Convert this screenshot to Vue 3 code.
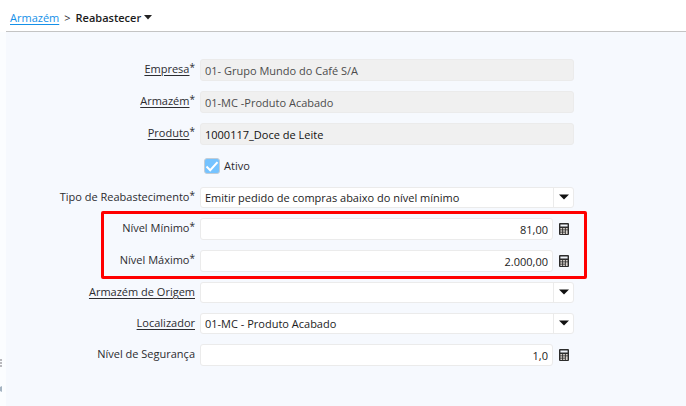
<template>
  <div class="page">
    <header class="topbar">
      <nav class="breadcrumb">
        <a href="#">Armazém</a>
        <span class="separator">&gt;</span>
        <button type="button" class="current">
          Reabastecer
          <svg width="8" height="5" viewBox="0 0 8 5"><path d="M0 0h8L4 4.6z" fill="#222" /></svg>
        </button>
      </nav>
    </header>

    <div class="body">
      <aside class="rail">
        <svg width="2" height="9" viewBox="0 0 2 9">
          <path d="M0 0h2v2H0zM0 3h2v2H0zM0 6h2v2H0z" fill="#b9b9bd" />
        </svg>
        <svg width="2" height="6" viewBox="0 0 2 6"><path d="M0 1l2-1v6L0 5z" fill="#a5b4c2" /></svg>
      </aside>

      <form class="form" @submit.prevent>
        <div v-for="(group, g) in groups" :key="g" class="group" :class="{ highlight: group.highlight }">
          <div v-for="field in group.fields" :key="field.id" class="row">
            <div class="label">
              <label v-if="field.type !== 'check'" :for="field.id">
                <span :class="{ underlined: field.link }">{{ field.label }}</span><span v-if="field.required" class="required">*</span>
              </label>
            </div>

            <input
              v-if="field.type === 'readonly'"
              :id="field.id"
              class="control readonly"
              :class="{ strong: field.strong }"
              type="text"
              :value="field.value"
              readonly
            />

            <div v-else-if="field.type === 'check'" class="check">
              <input :id="field.id" v-model="field.value" type="checkbox" />
              <svg v-if="field.value" width="16" height="16" viewBox="0 0 16 16">
                <path d="M2.5 8.5l3.7 3.7 7.3-8" fill="none" stroke="#fff" stroke-width="2" />
              </svg>
              <label :for="field.id">{{ field.label }}</label>
            </div>

            <div v-else-if="field.type === 'select'" class="select">
              <select :id="field.id" v-model="field.value">
                <option :value="field.value">{{ field.value }}</option>
              </select>
              <span class="arrow">
                <svg width="10" height="6" viewBox="0 0 10 6"><path d="M0 .5h10L5 5.5z" fill="#111" /></svg>
              </span>
            </div>

            <div v-else class="number">
              <input :id="field.id" v-model="field.value" class="control" type="text" />
              <button type="button" class="calc" aria-label="Calculadora">
                <svg width="10" height="12" viewBox="0 0 10 12">
                  <rect width="10" height="12" rx="1" fill="#2c2c2c" />
                  <path d="M1.4 1.5h7.2v2H1.4z" fill="#f0f4fa" />
                  <path
                    d="M1.4 5h1.8v1.5H1.4zM4.1 5h1.8v1.5H4.1zM6.8 5h1.8v1.5H6.8zM1.4 7.2h1.8v1.5H1.4zM4.1 7.2h1.8v1.5H4.1zM1.4 9.4h1.8v1.5H1.4zM4.1 9.4h1.8v1.5H4.1zM6.8 7.2h1.8v3.7H6.8z"
                    fill="#d9d3cd"
                  />
                </svg>
              </button>
            </div>
          </div>
        </div>
      </form>
    </div>
  </div>
</template>

<script setup>
import { ref } from 'vue'

const groups = ref([
  {
    fields: [
      { id: 'empresa', label: 'Empresa', type: 'readonly', link: true, required: true, value: '01- Grupo Mundo do Café S/A' },
      { id: 'armazem', label: 'Armazém', type: 'readonly', link: true, required: true, value: '01-MC -Produto Acabado' },
      { id: 'produto', label: 'Produto', type: 'readonly', link: true, required: true, strong: true, value: '1000117_Doce de Leite' },
      { id: 'ativo', label: 'Ativo', type: 'check', value: true },
      { id: 'tipo', label: 'Tipo de Reabastecimento', type: 'select', required: true, value: 'Emitir pedido de compras abaixo do nível mínimo' }
    ]
  },
  {
    highlight: true,
    fields: [
      { id: 'minimo', label: 'Nível Mínimo', type: 'number', required: true, value: '81,00' },
      { id: 'maximo', label: 'Nível Máximo', type: 'number', required: true, value: '2.000,00' }
    ]
  },
  {
    fields: [
      { id: 'origem', label: 'Armazém de Origem', type: 'select', link: true, value: '' },
      { id: 'localizador', label: 'Localizador', type: 'select', link: true, value: '01-MC - Produto Acabado' },
      { id: 'seguranca', label: 'Nível de Segurança', type: 'number', value: '1,0' }
    ]
  }
])
</script>

<style>
body {
  margin: 0;
  background: #f6f9fe;
}
</style>

<style scoped>
.page {
  display: flex;
  flex-direction: column;
  min-height: 100vh;
  background: #f6f9fe;
  color: #2c2c30;
  font-family: 'Segoe UI', 'Open Sans', sans-serif;
  font-size: 11px;
  line-height: 16px;
}

input,
select,
button {
  box-sizing: border-box;
  margin: 0;
  font: inherit;
  color: #1c1c1c;
}

.topbar {
  padding-left: 6px;
  background: #fff;
}

.breadcrumb {
  display: flex;
  align-items: center;
  gap: 5px;
  height: 32px;
  padding: 4px 4px 0;
  box-sizing: border-box;
  border-bottom: 1px solid #c4c4c4;
}

.breadcrumb a {
  color: #1490e8;
  text-underline-offset: 2px;
}

.current {
  display: flex;
  align-items: center;
  gap: 3px;
  padding: 0;
  border: 0;
  background: none;
  font-weight: 600;
}

.body {
  display: flex;
  flex: 1;
}

.rail {
  display: flex;
  flex-direction: column;
  justify-content: flex-end;
  gap: 18px;
  width: 6px;
  padding-bottom: 14px;
  box-sizing: border-box;
  background: #fbfdff;
}

.form {
  display: flex;
  flex: 1;
  flex-direction: column;
  gap: 10px;
  padding: 27px 112px 28px 0;
}

.group {
  display: flex;
  flex-direction: column;
  gap: 10px;
}

.highlight {
  position: relative;
}

.highlight::after {
  content: '';
  position: absolute;
  inset: -7px -13px -7px 95px;
  border: 3px solid #f00;
  border-radius: 2px;
  pointer-events: none;
}

.row {
  display: flex;
  gap: 5px;
}

.label {
  width: 189px;
  padding-top: 2px;
  text-align: right;
  white-space: nowrap;
}

.underlined {
  text-decoration: underline;
  text-underline-offset: 2px;
}

.required {
  font-size: 10px;
  line-height: 1;
  vertical-align: 2px;
}

.control {
  flex: 1;
  min-width: 0;
  height: 22px;
  padding: 0 4px;
  border: 1px solid #ebebeb;
  border-radius: 3px;
  background: #fff;
  outline: 0;
}

.readonly {
  background: #f0f0f0;
  color: #4c4c4c;
}

.readonly.strong {
  color: #111;
}

.check {
  display: grid;
  grid-template-columns: 16px auto;
  align-items: center;
  gap: 4px;
  height: 22px;
  padding-left: 4px;
}

.check input,
.check svg {
  grid-area: 1 / 1;
}

.check svg {
  pointer-events: none;
}

.check input {
  appearance: none;
  width: 16px;
  height: 16px;
  border: 1px solid #c3cdd6;
  border-radius: 3px;
  background: #fff;
}

.check input:checked {
  background: #75c3ff;
}

.select {
  display: grid;
  flex: 1;
  grid-template-columns: 1fr 20px;
  height: 21px;
  box-sizing: border-box;
  border: 1px solid #ebebeb;
  border-radius: 3px;
  background: #fff;
}

.select select {
  grid-area: 1 / 1 / 2 / 3;
  min-width: 0;
  padding: 1px 24px 0 4px;
  border: 0;
  background: none;
  appearance: none;
  outline: 0;
}

.arrow {
  display: grid;
  grid-area: 1 / 2;
  place-items: center;
  padding-bottom: 2px;
  border-left: 1px solid #ebebeb;
  pointer-events: none;
}

.number {
  display: flex;
  flex: 1;
  gap: 6px;
}

.number .control {
  text-align: right;
}

.calc {
  display: grid;
  place-items: center;
  width: 15px;
  padding: 0 5px 0 0;
  border: 0;
  background: none;
}
</style>
